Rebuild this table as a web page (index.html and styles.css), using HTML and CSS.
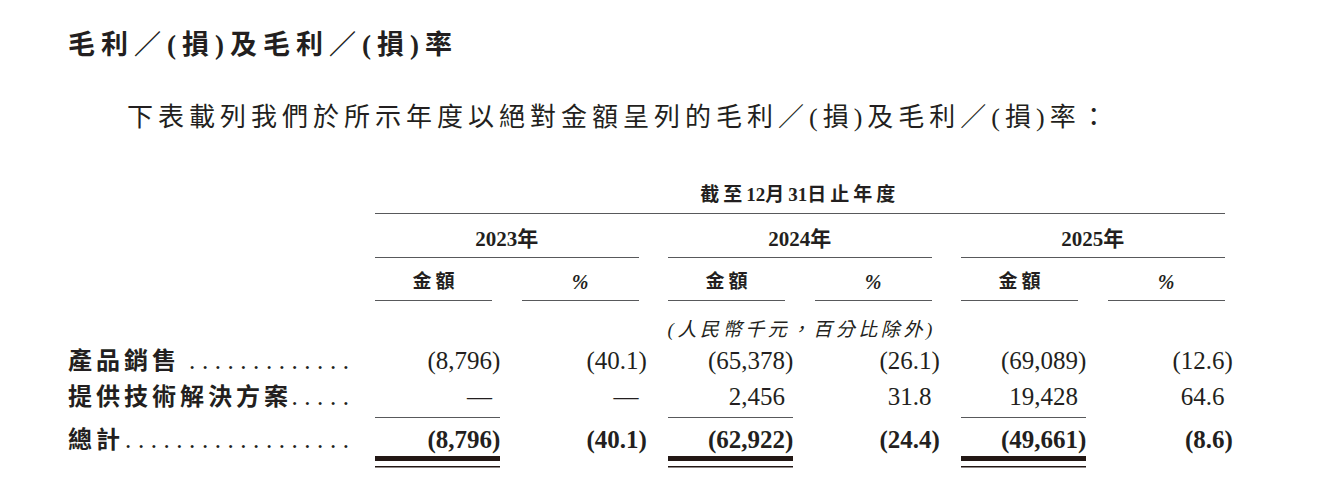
FILE: index.html
```html
<!DOCTYPE html>
<html lang="zh-Hant">
<head>
<meta charset="utf-8">
<title>毛利／(損)及毛利／(損)率</title>
<link rel="stylesheet" href="styles.css">
</head>
<body>
<main class="page">
  <h2 class="title">毛利／(損)及毛利／(損)率</h2>
  <p class="intro">下表載列我們於所示年度以絕對金額呈列的毛利／(損)及毛利／(損)率：</p>

  <div class="tbl">
    <div></div>
    <div class="hd h1"><span class="cj">截至</span>12<span class="cj">月</span>31<span class="cj">日止年度</span></div>

    <div></div>
    <div class="hd hy">2023年</div>
    <div class="hd hy">2024年</div>
    <div class="hd hy">2025年</div>

    <div></div>
    <div class="hd hc">金額</div>
    <div class="hd hc pct">%</div>
    <div class="hd hc">金額</div>
    <div class="hd hc pct">%</div>
    <div class="hd hc">金額</div>
    <div class="hd hc pct">%</div>

    <div></div>
    <div class="note">(人民幣千元，百分比除外)</div>

    <div class="lab"><span class="t">產品銷售</span><span class="d">.............</span></div>
    <div class="n">(8,796<span class="cp">)</span></div>
    <div class="n">(40.1<span class="cp">)</span></div>
    <div class="n">(65,378<span class="cp">)</span></div>
    <div class="n">(26.1<span class="cp">)</span></div>
    <div class="n">(69,089<span class="cp">)</span></div>
    <div class="n">(12.6<span class="cp">)</span></div>

    <div class="lab"><span class="t">提供技術解決方案</span><span class="d">.....</span></div>
    <div class="n ul">—</div>
    <div class="n">—</div>
    <div class="n ul">2,456</div>
    <div class="n">31.8</div>
    <div class="n ul">19,428</div>
    <div class="n">64.6</div>

    <div class="lab tot"><span class="t">總計</span><span class="d">..................</span></div>
    <div class="n b tot dl">(8,796<span class="cp">)</span></div>
    <div class="n b tot">(40.1<span class="cp">)</span></div>
    <div class="n b tot dl">(62,922<span class="cp">)</span></div>
    <div class="n b tot">(24.4<span class="cp">)</span></div>
    <div class="n b tot dl">(49,661<span class="cp">)</span></div>
    <div class="n b tot">(8.6<span class="cp">)</span></div>
  </div>
</main>
</body>
</html>
```

FILE: styles.css
```css
* {
  box-sizing: border-box;
  margin: 0;
  padding: 0;
}

html,
body {
  background: #ffffff;
}

body {
  color: #231f20;
  font-family: "Liberation Serif", "Noto Sans CJK TC", serif;
}

.page {
  width: 1326px;
  height: 498px;
  overflow: hidden;
  padding: 25px 0 0 68px;
}

.title {
  font-weight: 700;
  font-size: 27px;
  line-height: 40px;
  letter-spacing: 6px;
}

.intro {
  margin-top: 33px;
  font-size: 26px;
  line-height: 40px;
  letter-spacing: 5px;
  text-indent: 59px;
  font-weight: 400;
}

.tbl {
  margin-top: 38px;
  display: grid;
  grid-template-columns: 277.5px repeat(6, 117px);
  grid-template-rows: 37.5px 44px 43.5px 42px 36px 38.5px 50px;
  column-gap: 29.5px;
}

.hd {
  font-weight: 700;
  text-align: center;
  border-bottom: 1.5px solid #58595b;
}

.h1 {
  grid-column: span 6;
  padding-top: 2px;
  line-height: 34px;
  font-size: 19px;
}

.h1 .cj {
  letter-spacing: 4px;
}

.hy {
  grid-column: span 2;
  padding-top: 12.5px;
  line-height: 26px;
  font-size: 21px;
}

.hc {
  padding-top: 11.5px;
  padding-left: 4px;
  line-height: 26px;
  font-size: 19px;
  letter-spacing: 4px;
}

.hc.pct {
  font-style: italic;
  font-size: 20px;
  letter-spacing: 0;
  padding-left: 0;
}

.note {
  grid-column: span 6;
  text-align: center;
  font-style: italic;
  font-size: 19px;
  letter-spacing: 3.6px;
  padding-top: 16px;
  padding-left: 4px;
  line-height: 26px;
}

.lab {
  display: flex;
  font-weight: 700;
  font-size: 24px;
  line-height: 36px;
  white-space: nowrap;
}

.lab .t {
  flex: 0 1 auto;
  min-width: 0;
  letter-spacing: 4px;
}

.lab .d {
  flex: none;
  margin-left: auto;
  margin-right: -10px;
  font-weight: 400;
  font-size: 25px;
  letter-spacing: 6.55px;
}

.n {
  margin-right: -8px;
  padding-right: 8px;
  text-align: right;
  font-size: 25px;
  line-height: 36px;
  white-space: nowrap;
}

.cp {
  margin-right: -0.333em;
}

.b {
  font-weight: 700;
}

.ul {
  border-bottom: 1.5px solid #58595b;
}

.tot {
  padding-top: 4px;
}

.dl {
  background:
    linear-gradient(#231815, #231815) 0 38.5px / 100% 5px no-repeat,
    linear-gradient(#231815, #231815) 0 48px / 100% 1.5px no-repeat;
}
```
